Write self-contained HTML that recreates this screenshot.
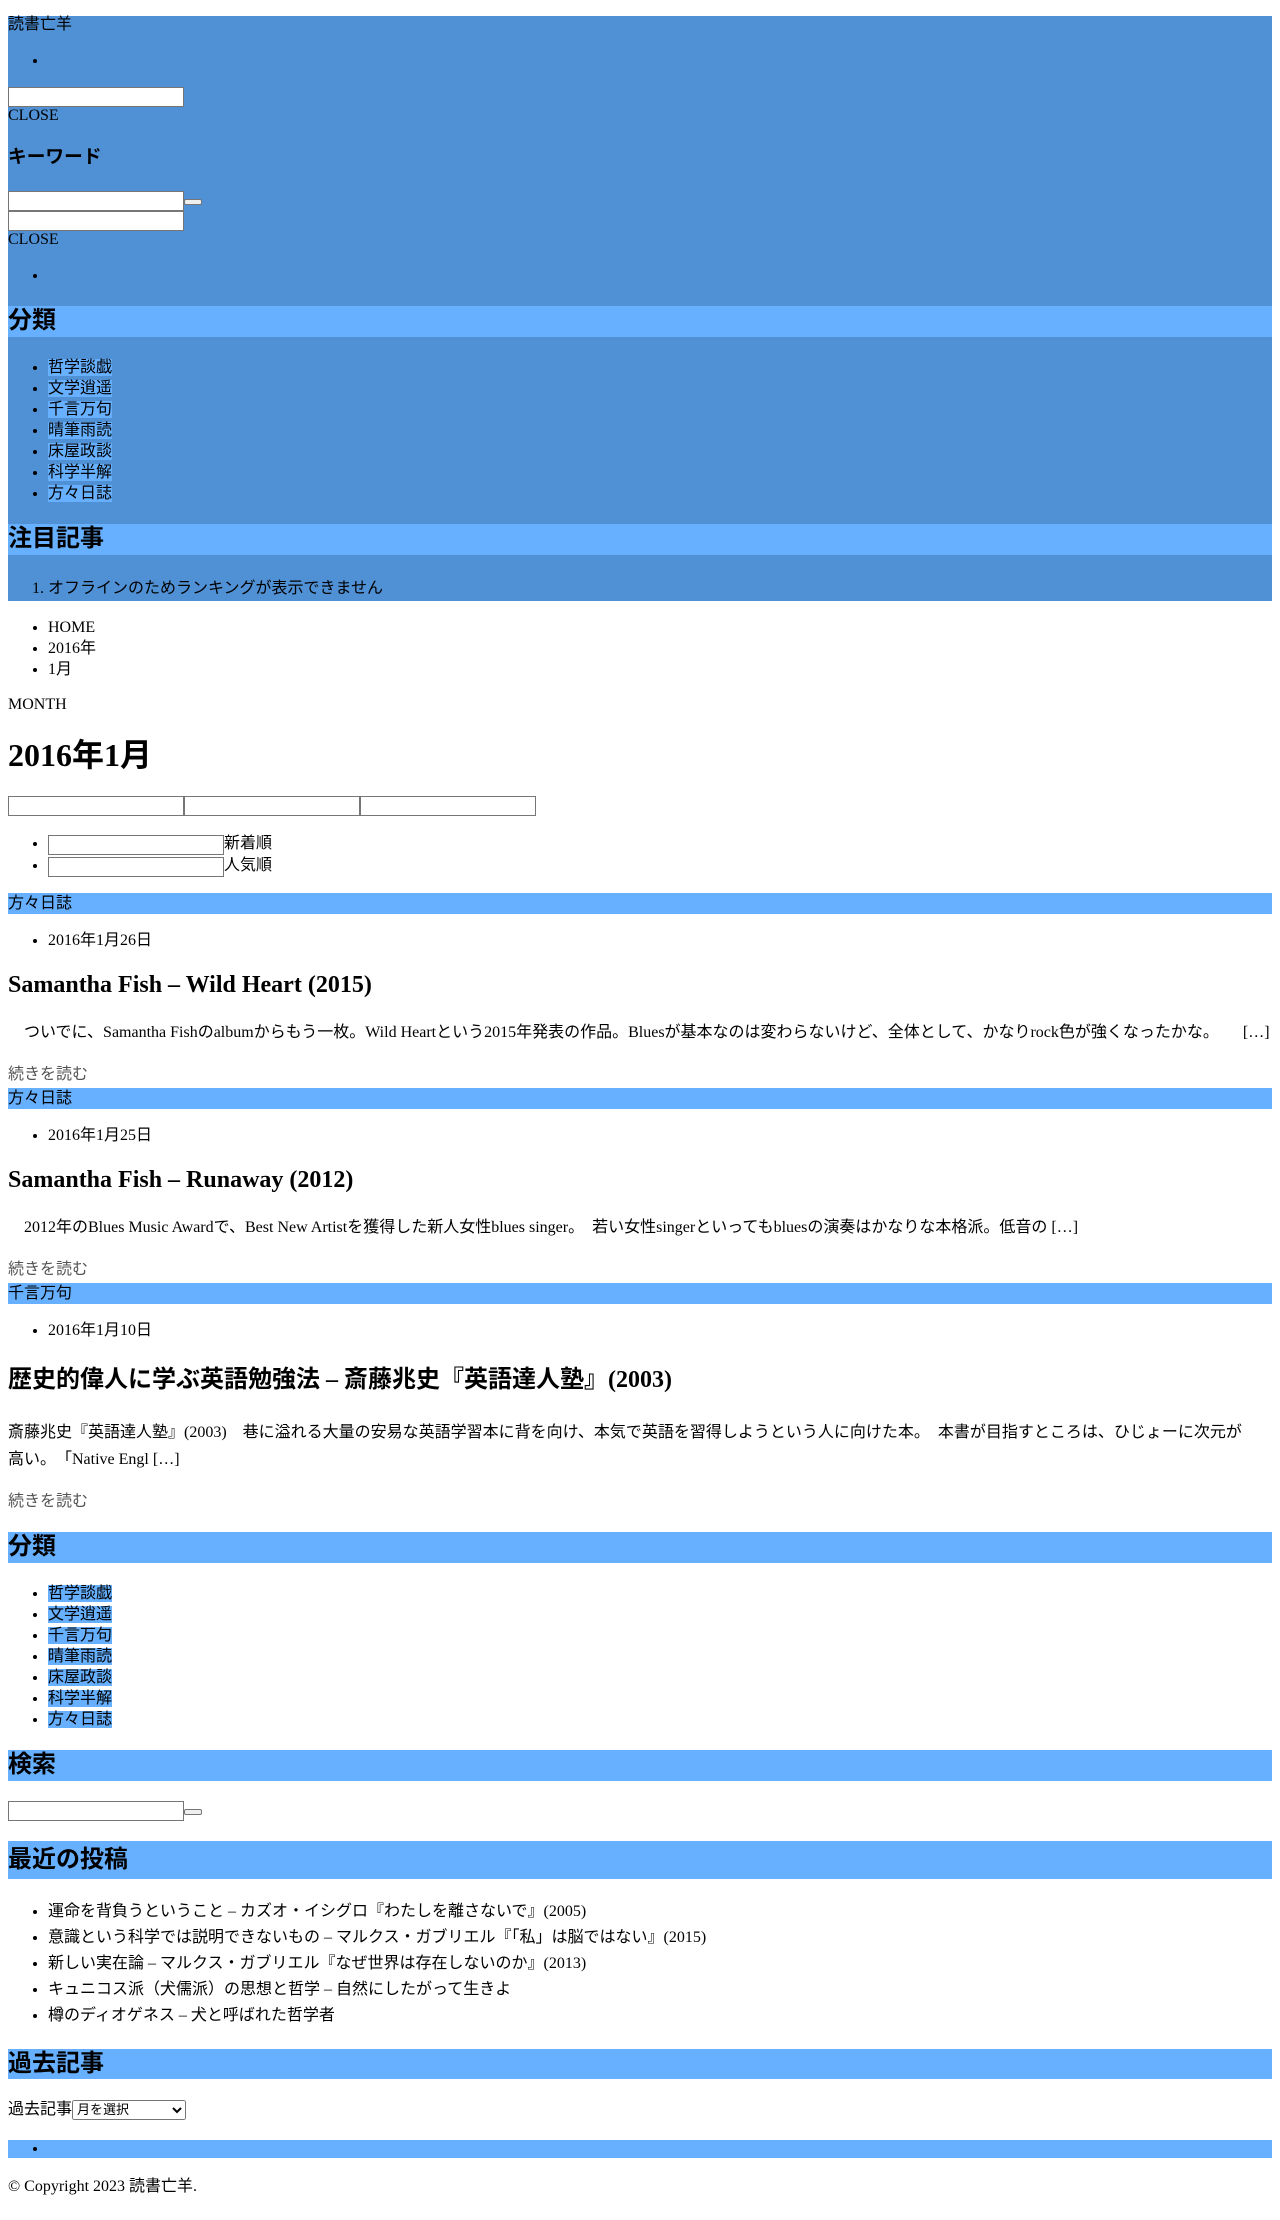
<!DOCTYPE html>
<html><head><meta charset="utf-8"><style>
body{margin:0;padding:16px 8px 8px;font-family:"Liberation Serif","Noto Sans CJK JP",serif;font-size:16px;line-height:18px;color:#000;}
header{background:#5091d5;}
li{line-height:21px;}
.cat{background:#66b0ff;}
h2{line-height:28px;margin:20px 0;}
h2.bar{background:#66b0ff;line-height:31px;}
h1{line-height:40px;margin:21px 0;}
h3{line-height:28px;margin:19px 0;}
input[type=text]{width:170px;height:16px;border:1px solid #767676;padding:1px 2px;font-size:13px;vertical-align:bottom;margin:0;}
.btn{display:inline-block;width:16px;height:4px;border:1px solid #767676;background:#efefef;border-radius:2px;vertical-align:middle;}
.catlbl{background:#66b0ff;line-height:21px;}
.more{color:#555;line-height:26px;}
.ex{font-size:16px;line-height:27px;margin:20px 0 16px;}
.recent li{line-height:26px;}
ul,ol{margin:16px 0;}
</style></head><body>
<header>
<div>読書亡羊</div>
<ul><li></li></ul>
<input type="text"><br>CLOSE
<h3>キーワード</h3>
<div><input type="text"><span class="btn"></span><br><input type="text"><br>CLOSE</div>
<ul><li></li></ul>
<h2 class="bar">分類</h2>
<ul>
<li><span class="cat">哲学談戯</span></li>
<li><span class="cat">文学逍遥</span></li>
<li><span class="cat">千言万句</span></li>
<li><span class="cat">晴筆雨読</span></li>
<li><span class="cat">床屋政談</span></li>
<li><span class="cat">科学半解</span></li>
<li><span class="cat">方々日誌</span></li>
</ul>
<h2 class="bar">注目記事</h2>
<ol style="margin:23px 0 0;padding-bottom:2px"><li>オフラインのためランキングが表示できません</li></ol>
</header>
<ul><li>HOME</li><li>2016年</li><li>1月</li></ul>
<p style="margin:14px 0 0">MONTH</p>
<h1>2016年1月</h1>
<div style="height:21px"><input type="text"><input type="text"><input type="text"></div>
<ul><li style="line-height:22px"><input type="text">新着順</li><li style="line-height:22px"><input type="text">人気順</li></ul>
<div class="catlbl">方々日誌</div>
<ul><li>2016年1月26日</li></ul>
<h2>Samantha Fish – Wild Heart (2015)</h2>
<p class="ex">　ついでに、Samantha Fishのalbumからもう一枚。Wild Heartという2015年発表の作品。Bluesが基本なのは変わらないけど、全体として、かなりrock色が強くなったかな。　　[…]</p>
<div class="more">続きを読む</div>
<div class="catlbl">方々日誌</div>
<ul><li>2016年1月25日</li></ul>
<h2>Samantha Fish – Runaway (2012)</h2>
<p class="ex">　2012年のBlues Music Awardで、Best New Artistを獲得した新人女性blues singer。　若い女性singerといってもbluesの演奏はかなりな本格派。低音の […]</p>
<div class="more">続きを読む</div>
<div class="catlbl">千言万句</div>
<ul><li>2016年1月10日</li></ul>
<h2 style="line-height:38px">歴史的偉人に学ぶ英語勉強法 – 斎藤兆史『英語達人塾』(2003)</h2>
<p class="ex">斎藤兆史『英語達人塾』(2003)　巷に溢れる大量の安易な英語学習本に背を向け、本気で英語を習得しようという人に向けた本。　本書が目指すところは、ひじょーに次元が<br>高い。　「Native Engl […]</p>
<div class="more">続きを読む</div>
<h2 class="bar" style="margin-top:17px">分類</h2>
<ul>
<li><span class="cat">哲学談戯</span></li>
<li><span class="cat">文学逍遥</span></li>
<li><span class="cat">千言万句</span></li>
<li><span class="cat">晴筆雨読</span></li>
<li><span class="cat">床屋政談</span></li>
<li><span class="cat">科学半解</span></li>
<li><span class="cat">方々日誌</span></li>
</ul>
<h2 class="bar">検索</h2>
<div style="height:20px"><input type="text"><span class="btn"></span></div>
<h2 class="bar" style="line-height:38px">最近の投稿</h2>
<ul class="recent">
<li>運命を背負うということ – カズオ・イシグロ『わたしを離さないで』(2005)</li>
<li>意識という科学では説明できないもの – マルクス・ガブリエル『「私」は脳ではない』(2015)</li>
<li>新しい実在論 – マルクス・ガブリエル『なぜ世界は存在しないのか』(2013)</li>
<li>キュニコス派（犬儒派）の思想と哲学 – 自然にしたがって生きよ</li>
<li>樽のディオゲネス – 犬と呼ばれた哲学者</li>
</ul>
<h2 class="bar" style="line-height:30px">過去記事</h2>
<div style="line-height:21px">過去記事<select style="width:114px;font-size:13px;height:20px"><option>月を選択</option></select></div>
<ul style="background:#66b0ff;margin-top:20px"><li style="line-height:18px"></li></ul>
<p style="margin-top:20px">© Copyright 2023 読書亡羊.</p>
</body></html>
